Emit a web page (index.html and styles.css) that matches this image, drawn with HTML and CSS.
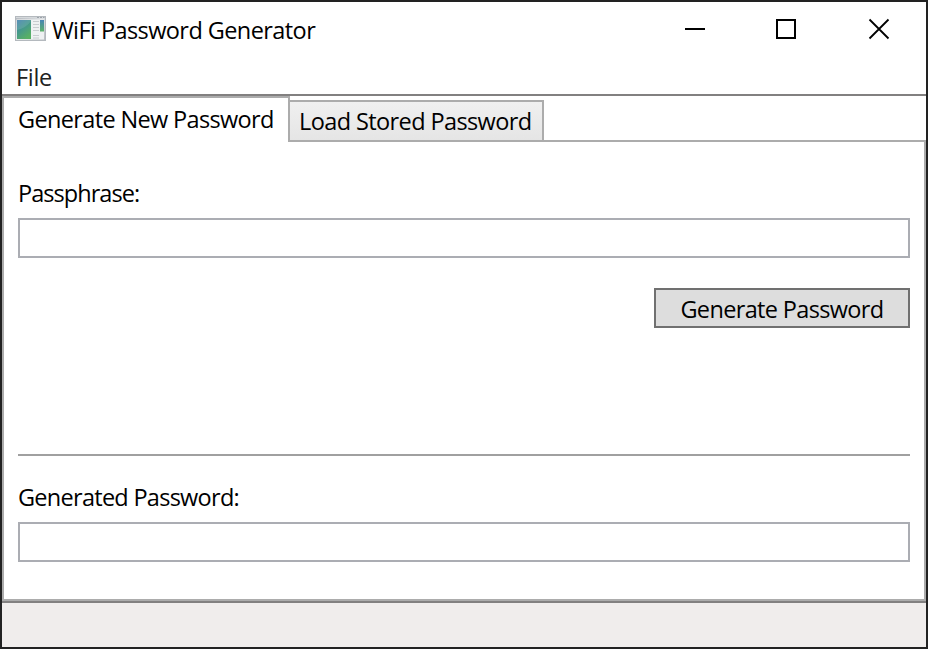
FILE: index.html
```html
<!DOCTYPE html>
<html lang="en">
<head>
<meta charset="utf-8">
<title>WiFi Password Generator</title>
<link rel="stylesheet" href="styles.css">
</head>
<body>
<div class="window">
  <header class="titlebar">
    <svg class="app-icon" width="32" height="27" viewBox="0 0 32 27">
      <defs>
        <linearGradient id="frame" x1="0" y1="0" x2="1" y2="1"><stop offset="0" stop-color="#b3b8be"/><stop offset=".5" stop-color="#dcdfe2"/><stop offset="1" stop-color="#b8bcc0"/></linearGradient>
        <linearGradient id="pane" x1="0" y1="0" x2=".6" y2="1"><stop offset="0" stop-color="#3f7fae"/><stop offset=".5" stop-color="#45988c"/><stop offset="1" stop-color="#58b065"/></linearGradient>
        <linearGradient id="strip" x1="0" y1="0" x2="0" y2="1"><stop offset="0" stop-color="#4784b5"/><stop offset="1" stop-color="#5bb268"/></linearGradient>
      </defs>
      <rect x=".5" y=".5" width="30" height="24" fill="url(#frame)" stroke="#b4b9be"/>
      <path d="M1 1.5H30" stroke="#d5d9dc"/>
      <path d="M22 1.5h2M25 1.5h2M28 1.5h1.500" stroke="#9ca3aa"/>
      <rect x="1.500" y="3.500" width="27.500" height="20" fill="#eff1f2"/>
      <rect x="2" y="4" width="14" height="19" fill="url(#pane)"/>
      <path d="M2 14Q11 12 16 5V4H2Z" fill="#fff" opacity=".12"/>
      <path d="M18 5.500h6M18 8.500h6M18 11.500h6M18 14.500h6M18 19.500h6M18 22h6" stroke="#c8cccf"/>
      <rect x="25" y="4" width="4" height="11.500" fill="url(#strip)"/>
    </svg>
    <h1 class="title">WiFi Password Generator</h1>
    <svg class="controls" width="206" height="20" viewBox="0 0 206 20" fill="none" stroke="#000" stroke-width="2">
      <path d="M0 10H20"/>
      <rect x="92" y="1" width="18" height="18"/>
      <path d="M184.500 .5L203.500 19.500M203.500 .5L184.500 19.500" stroke-width="1.800"/>
    </svg>
  </header>
  <nav class="menubar"><span class="menu-item">File</span></nav>
  <main class="tab-control">
    <div class="tabs">
      <div class="tab tab-active">Generate New Password</div>
      <div class="tab tab-idle">Load Stored Password</div>
      <div class="tabs-rest"></div>
    </div>
    <section class="panel">
      <label class="label label-passphrase" for="passphrase">Passphrase:</label>
      <input class="field" id="passphrase" type="text">
      <button class="generate" type="button">Generate Password</button>
      <hr class="separator">
      <label class="label" for="generated">Generated Password:</label>
      <input class="field" id="generated" type="text">
    </section>
  </main>
  <footer class="statusbar"></footer>
</div>
</body>
</html>
```
FILE: styles.css
```css
* { box-sizing: border-box; }
body {
  margin: 0;
  font: 23.5px/32px "Open Sans", "Noto Sans", sans-serif;
  letter-spacing: -0.65px;
  color: #000;
}
.window {
  width: 928px;
  height: 649px;
  border: 2px solid #222;
  background: #fff;
  display: flex;
  flex-direction: column;
}
.titlebar {
  height: 56px;
  padding: 0 35px 0 13px;
  display: flex;
  align-items: flex-start;
}
.app-icon { margin-top: 14px; }
.title {
  margin: 12px auto 0 5px;
  font-size: inherit;
  font-weight: 400;
  white-space: nowrap;
  letter-spacing: -0.58px;
}
.controls { margin-top: 17px; overflow: visible; }
.menubar {
  height: 38px;
  border-bottom: 2px solid #828080;
  padding: 3px 14px 0;
  color: #212121;
  letter-spacing: -0.3px;
}
.tabs { display: flex; height: 46px; }
.tab {
  white-space: nowrap;
  border: 2px solid #acacac;
}
.tab-active {
  width: 288px;
  border-bottom: 0;
  border-right: 0;
  padding: 5px 0 0 14px;
  position: relative;
}
.tab-active::after {
  content: "";
  position: absolute;
  right: 0;
  top: -2px;
  width: 2px;
  height: 6px;
  background: #acacac;
}
.tab-idle {
  width: 256px;
  margin: 4px 0 0 -2px;
  padding: 3px 0 0 9px;
  background: linear-gradient(#f0f0f0, #e5e5e5);
  letter-spacing: -0.6px;
}
.tabs-rest { flex: 1; border-bottom: 2px solid #acacac; }
.panel {
  height: 459px;
  border: 2px solid #acacac;
  border-top: 0;
  padding: 35px 14px 0;
  display: flex;
  flex-direction: column;
}
.label {
  height: 32px;
  align-self: flex-start;
  white-space: nowrap;
  letter-spacing: -0.72px;
}
.label-passphrase { letter-spacing: -0.95px; }
.field {
  margin: 9px 0 0;
  width: 100%;
  height: 40px;
  padding: 0 6px;
  border: 2px solid #abadb3;
  background: #fff;
  font: inherit;
}
.generate {
  align-self: flex-end;
  width: 256px;
  height: 40px;
  margin-top: 30px;
  padding: 2px 0 0;
  border: 2px solid #707070;
  background: #ddd;
  color: #000;
  font: inherit;
  letter-spacing: inherit;
  white-space: nowrap;
}
.separator {
  width: 100%;
  height: 2px;
  margin: 126px 0 25px;
  border: 0;
  background: #a0a0a0;
}
.statusbar {
  flex: 1;
  border-top: 2px solid #828080;
  background: #f0edec;
}
```
